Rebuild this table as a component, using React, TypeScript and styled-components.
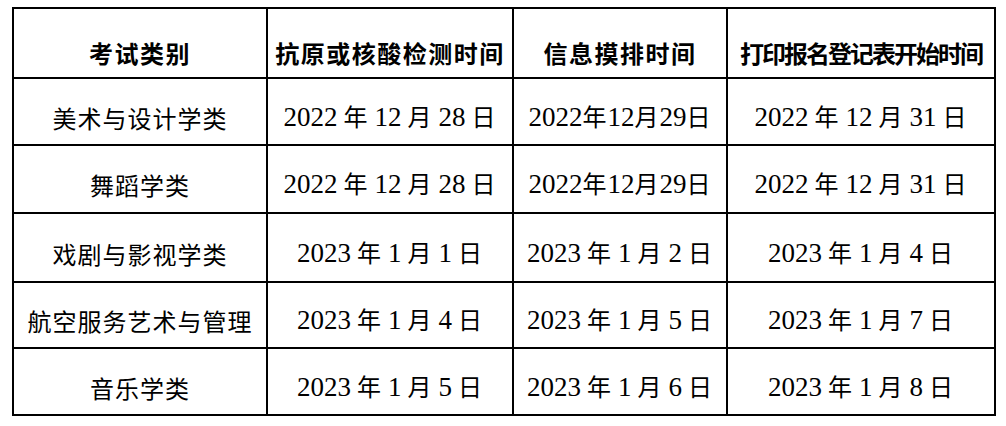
import React from 'react';
import styled, { createGlobalStyle } from 'styled-components';

const GlobalStyle = createGlobalStyle`
  body {
    margin: 7px 0 0 12px;
    background: #ffffff;
    font-family: "Liberation Serif", "Noto Sans CJK SC", serif;
    color: #000000;
  }
`;

const Table = styled.table`
  border-collapse: collapse;
  table-layout: fixed;
  width: 984px;
  border: 2px solid #000;
`;

const Col = styled.col<{ $w: number }>`
  width: ${p => p.$w}px;
`;

const Row = styled.tr<{ $h: number }>`
  height: ${p => p.$h}px;
`;

const HeadCell = styled.th<{ $tight?: boolean }>`
  border: 2px solid #000;
  padding: 20px 0 0 0;
  text-align: center;
  vertical-align: middle;
  font-family: "Noto Sans CJK SC", sans-serif;
  font-weight: 700;
  font-size: 24px;
  letter-spacing: ${p => (p.$tight ? '-2px' : '1.5px')};
  white-space: nowrap;
  line-height: 1.3;
`;

const Cell = styled.td`
  border: 2px solid #000;
  padding: 12px 0 0 0;
  text-align: center;
  vertical-align: middle;
  font-family: "Noto Sans CJK SC", sans-serif;
  font-size: 24px;
  letter-spacing: 1px;
  white-space: nowrap;
  line-height: 1.3;
`;

const Num = styled.span`
  font-family: "Liberation Serif", serif;
  font-size: 27px;
  letter-spacing: 0;
`;

const Gap = styled.span`
  font-family: "Liberation Serif", serif;
  font-size: 24px;
  letter-spacing: 0;
`;

const widths = [254, 246, 214, 268];
const rowHeights = [67, 68, 69, 66, 67];

const headers = ['考试类别', '抗原或核酸检测时间', '信息摸排时间', '打印报名登记表开始时间'];

const rows: string[][] = [
  ['美术与设计学类', '2022 年 12 月 28 日', '2022年12月29日', '2022 年 12 月 31 日'],
  ['舞蹈学类', '2022 年 12 月 28 日', '2022年12月29日', '2022 年 12 月 31 日'],
  ['戏剧与影视学类', '2023 年 1 月 1 日', '2023 年 1 月 2 日', '2023 年 1 月 4 日'],
  ['航空服务艺术与管理', '2023 年 1 月 4 日', '2023 年 1 月 5 日', '2023 年 1 月 7 日'],
  ['音乐学类', '2023 年 1 月 5 日', '2023 年 1 月 6 日', '2023 年 1 月 8 日'],
];

// digits get the serif face, the rest stays CJK
const renderText = (text: string) =>
  text.split(/(\d+| )/).filter(Boolean).map((part, i) => {
    if (/^\d+$/.test(part)) return <Num key={i}>{part}</Num>;
    if (part === ' ') return <Gap key={i}> </Gap>;
    return <React.Fragment key={i}>{part}</React.Fragment>;
  });

const App: React.FC = () => {
  return (
    <>
      <GlobalStyle />
      <Table>
        <colgroup>
          {widths.map((w, i) => (
            <Col key={i} $w={w} />
          ))}
        </colgroup>
        <thead>
          <Row $h={70}>
            {headers.map((h, i) => (
              <HeadCell key={h} $tight={i === 3}>{h}</HeadCell>
            ))}
          </Row>
        </thead>
        <tbody>
          {rows.map((row, r) => (
            <Row key={r} $h={rowHeights[r]}>
              {row.map((text, c) => (
                <Cell key={c}>{c === 0 ? text : renderText(text)}</Cell>
              ))}
            </Row>
          ))}
        </tbody>
      </Table>
    </>
  );
};

export default App;
